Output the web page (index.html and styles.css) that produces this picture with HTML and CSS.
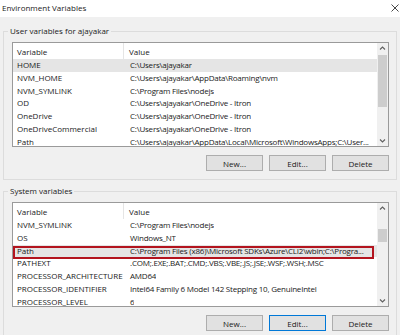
FILE: index.html
```html
<!DOCTYPE html>
<html>
<head>
<meta charset="utf-8">
<link rel="stylesheet" href="styles.css">
</head>
<body>
<div class="window">
  <div class="titlebar">
    <span class="title">Environment Variables</span>
    <svg class="close" width="8" height="8" viewBox="0 0 8 8"><path d="M0.5 0.5 L7.5 7.5 M7.5 0.5 L0.5 7.5" stroke="#333" stroke-width="0.9" fill="none"/></svg>
  </div>
  <div class="body">
    <fieldset class="group">
      <legend>User variables for ajayakar</legend>
      <div class="list">
        <div class="table">
          <div class="header"><div class="c1">Variable</div><div class="c2">Value</div></div>
          <div class="row selected"><div class="c1">HOME</div><div class="c2">C:\Users\ajayakar</div></div>
          <div class="row"><div class="c1">NVM_HOME</div><div class="c2">C:\Users\ajayakar\AppData\Roaming\nvm</div></div>
          <div class="row"><div class="c1">NVM_SYMLINK</div><div class="c2">C:\Program Files\nodejs</div></div>
          <div class="row"><div class="c1">OD</div><div class="c2">C:\Users\ajayakar\OneDrive - Itron</div></div>
          <div class="row"><div class="c1">OneDrive</div><div class="c2">C:\Users\ajayakar\OneDrive - Itron</div></div>
          <div class="row"><div class="c1">OneDriveCommercial</div><div class="c2">C:\Users\ajayakar\OneDrive - Itron</div></div>
          <div class="row"><div class="c1">Path</div><div class="c2">C:\Users\ajayakar\AppData\Local\Microsoft\WindowsApps;C:\User...</div></div>
        </div>
        <div class="scrollbar">
          <svg class="arrow" width="11" height="11" viewBox="0 0 11 11"><path d="M3 6.5 L5.5 4 L8 6.5" stroke="#606060" stroke-width="1.1" fill="none"/></svg>
          <div class="track"><div class="thumb thumb-user"></div></div>
          <svg class="arrow" width="11" height="11" viewBox="0 0 11 11"><path d="M3 4.5 L5.5 7 L8 4.5" stroke="#606060" stroke-width="1.1" fill="none"/></svg>
        </div>
      </div>
      <div class="buttons">
        <button>New...</button>
        <button>Edit...</button>
        <button>Delete</button>
      </div>
    </fieldset>

    <fieldset class="group group-system">
      <legend>System variables</legend>
      <div class="list">
        <div class="table">
          <div class="header"><div class="c1">Variable</div><div class="c2">Value</div></div>
          <div class="row"><div class="c1">NVM_SYMLINK</div><div class="c2">C:\Program Files\nodejs</div></div>
          <div class="row"><div class="c1">OS</div><div class="c2">Windows_NT</div></div>
          <div class="row selected marked"><div class="c1">Path</div><div class="c2">C:\Program Files (x86)\Microsoft SDKs\Azure\CLI2\wbin;C:\Progra...</div></div>
          <div class="row"><div class="c1">PATHEXT</div><div class="c2">.COM;.EXE;.BAT;.CMD;.VBS;.VBE;.JS;.JSE;.WSF;.WSH;.MSC</div></div>
          <div class="row"><div class="c1">PROCESSOR_ARCHITECTURE</div><div class="c2">AMD64</div></div>
          <div class="row"><div class="c1">PROCESSOR_IDENTIFIER</div><div class="c2">Intel64 Family 6 Model 142 Stepping 10, GenuineIntel</div></div>
          <div class="row"><div class="c1">PROCESSOR_LEVEL</div><div class="c2">6</div></div>
        </div>
        <div class="scrollbar">
          <svg class="arrow" width="11" height="11" viewBox="0 0 11 11"><path d="M3 6.5 L5.5 4 L8 6.5" stroke="#606060" stroke-width="1.1" fill="none"/></svg>
          <div class="track"><div class="thumb thumb-system"></div></div>
          <svg class="arrow" width="11" height="11" viewBox="0 0 11 11"><path d="M3 4.5 L5.5 7 L8 4.5" stroke="#606060" stroke-width="1.1" fill="none"/></svg>
        </div>
      </div>
      <div class="buttons">
        <button>New...</button>
        <button class="focused">Edit...</button>
        <button>Delete</button>
      </div>
    </fieldset>
  </div>
</div>
</body>
</html>
```

FILE: styles.css
```css
* { box-sizing: border-box; }
html, body { margin: 0; padding: 0; }
body {
  width: 400px;
  height: 335px;
  overflow: hidden;
  background: #f0f0f0;
}
.window {
  width: 400px;
  height: 335px;
  overflow: hidden;
  background: #f0f0f0;
  font-family: "Open Sans", "Noto Sans", sans-serif;
  font-size: 8px;
  color: #1a1a1a;
}
.titlebar {
  height: 17px;
  background: #fff;
  display: flex;
  align-items: center;
  justify-content: space-between;
  padding: 0 1px 1px 2px;
}
.title { line-height: 10px; }
.close { display: block; }
.body {
  padding: 9px 3px 0 3px;
}
.group {
  margin: 0;
  border: 1px solid #dcdcdc;
  padding: 6px 7px 8px 8px;
  min-width: 0;
}
.group legend {
  padding: 0 2px;
  margin-left: -4px;
  line-height: 10px;
}
.group-system {
  margin-top: 6px;
}
.list {
  display: flex;
  height: 105px;
  border: 1px solid #9a9a9a;
  background: #fff;
}
.table {
  flex: 1;
  min-width: 0;
  overflow: hidden;
}
.header {
  display: flex;
  height: 16px;
  align-items: center;
}
.header .c1 {
  width: 111px;
  height: 100%;
  display: flex;
  align-items: center;
  padding-left: 4px;
  border-right: 1px solid #e5e5e5;
}
.header .c2 { padding-left: 5px; }
.row {
  display: flex;
  height: 12.8px;
  line-height: 12.8px;
  white-space: nowrap;
  position: relative;
}
.row .c1 {
  width: 112px;
  flex: none;
  padding-left: 4px;
  overflow: hidden;
}
.row .c2 {
  padding-left: 5px;
  overflow: hidden;
  letter-spacing: -0.22px;
}
.row.selected { background: #e5e5e5; }
.row.marked::after {
  content: "";
  position: absolute;
  left: 0;
  right: 3px;
  top: 1px;
  bottom: -2px;
  border: 2px solid #b3141e;
}
.scrollbar {
  width: 11px;
  flex: none;
  background: #f0f0f0;
  display: flex;
  flex-direction: column;
}
.arrow { display: block; flex: none; }
.track { flex: 1; }
.thumb {
  background: #cdcdcd;
  margin: 0 1px;
}
.thumb-user { margin-top: 1px; height: 52px; }
.thumb-system { margin-top: 15px; height: 13px; }
.buttons {
  display: flex;
  justify-content: flex-end;
  gap: 6px;
  margin-top: 8px;
}
.buttons button {
  width: 57px;
  height: 16px;
  padding: 0;
  margin: 0;
  background: #e1e1e1;
  border: 1px solid #adadad;
  font: inherit;
  color: #1a1a1a;
}
.buttons button.focused {
  border-color: #0078d7;
}
```
